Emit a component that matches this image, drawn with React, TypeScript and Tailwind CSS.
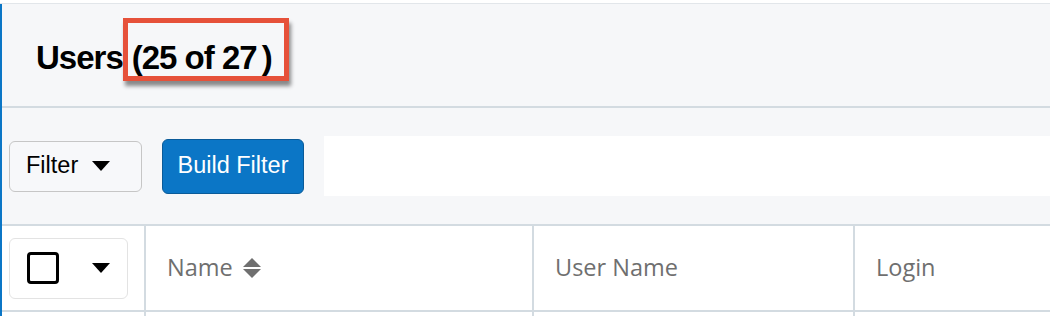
import React from 'react';

// Small solid caret used by the dropdowns
function Caret({ className }: { className?: string }) {
  return (
    <svg className={className} width="18" height="10" viewBox="0 0 18 10">
      <path d="M0 0 H18 L9 10 Z" fill="#000" />
    </svg>
  );
}

function SortIcon() {
  return (
    <svg width="18" height="20" viewBox="0 0 18 20" className="ml-[10px]">
      <path d="M9 0 L18 9 H0 Z" fill="#6f6f6f" />
      <path d="M0 11 H18 L9 20 Z" fill="#6f6f6f" />
    </svg>
  );
}

function HeaderCell({ label, sortable, width }: { label: string; sortable?: boolean; width: string }) {
  return (
    <div className={`${width} shrink-0 flex items-center pl-[21px] border-r-2 border-[#d3dbe1]`}>
      <span className="text-[23.5px] text-[#6f6f6f] font-['Open_Sans',sans-serif]">{label}</span>
      {sortable && <SortIcon />}
    </div>
  );
}

export default function App() {
  return (
    <div className="w-[1050px] h-[316px] overflow-hidden bg-white pt-[3px]">
      <div className="border-t border-[#e2e6ea]" />
      <div className="border-l-2 border-[#0b76c6] h-full">
        {/* Page title */}
        <div className="h-[104px] bg-[#f6f7f9] border-b-2 border-[#d3dbe1] flex items-center pl-[34px]">
          <h1 className="mt-[5px] font-['Liberation_Sans',Arial,sans-serif] font-bold text-[33px] leading-none tracking-[-1px] text-black flex items-center">
            <span>Users</span>
            <span className="relative ml-[9px]">
              (25 of 27<span className="ml-[5px]">)</span>
              <span className="absolute left-[-9px] right-[-17px] top-[-23px] bottom-[-7px] border-[5px] border-[#e6513a] shadow-[2px_5px_4px_rgba(0,0,0,0.45)]" />
            </span>
          </h1>
        </div>

        {/* Filter bar */}
        <div className="h-[118px] bg-[#f6f7f9] border-b-2 border-[#d3dbe1] flex items-center pl-[7px] gap-[20px] font-['Liberation_Sans',Arial,sans-serif]">
          <button className="w-[133px] h-[51px] rounded-[6px] border border-[#c6c6c6] bg-[#f7f8fa] flex items-center pl-[16px] text-[23.5px] text-black">
            Filter
            <Caret className="ml-[14px]" />
          </button>
          <button className="w-[142px] h-[55px] rounded-[6px] border border-[#0a5b99] bg-[#0b76c6] text-white text-[23.5px] flex items-center justify-center">
            Build Filter
          </button>
          <div className="flex-1 h-[60px] bg-white" />
        </div>

        {/* Table header */}
        <div className="h-[86px] border-b-2 border-[#d3dbe1] flex bg-white">
          <div className="w-[144px] shrink-0 flex items-center pl-[7px] border-r-2 border-[#d3dbe1]">
            <div className="w-[119px] h-[61px] rounded-[6px] border border-[#e3e3e3] flex items-center pl-[17px]">
              <span className="w-[32px] h-[32px] rounded-[4px] border-[3.5px] border-black" />
              <Caret className="ml-[33px]" />
            </div>
          </div>
          <HeaderCell label="Name" sortable width="w-[388px]" />
          <HeaderCell label="User Name" width="w-[321px]" />
          <div className="flex-1 flex items-center pl-[21px]">
            <span className="text-[23.5px] text-[#6f6f6f] font-['Open_Sans',sans-serif]">Login</span>
          </div>
        </div>

        {/* First data row (cut off) */}
        <div className="h-[20px] flex">
          <div className="w-[144px] border-r-2 border-[#d3dbe1]" />
          <div className="w-[388px] border-r-2 border-[#d3dbe1]" />
          <div className="w-[321px] border-r-2 border-[#d3dbe1]" />
        </div>
      </div>
    </div>
  );
}
